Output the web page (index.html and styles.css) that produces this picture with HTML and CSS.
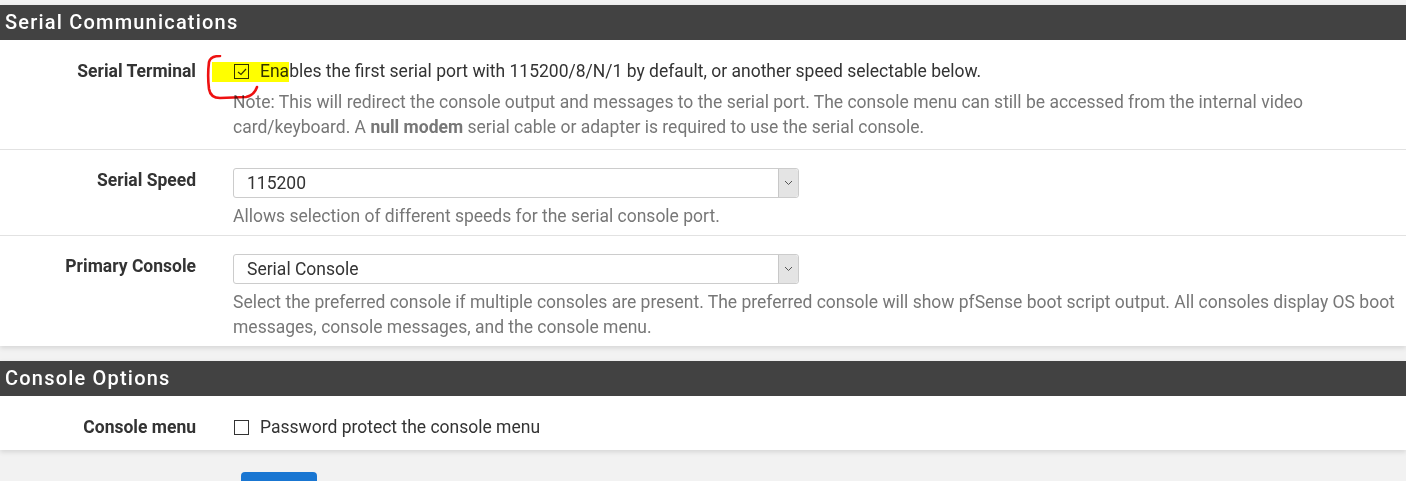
FILE: index.html
```html
<!DOCTYPE html>
<html lang="en">
<head>
    <meta charset="UTF-8">
    <meta name="viewport" content="width=device-width, initial-scale=1.0">
    <title>System / Advanced / Admin Access</title>
    <link rel="stylesheet" href="styles.css">
</head>
<body>
    <div class="panel">
        <div class="panel-heading">Serial Communications</div>
        <div class="panel-body">
            <div class="form-group first">
                <div class="label">Serial Terminal</div>
                <div class="field">
                    <label class="checkline">
                        <span class="check">
                            <svg width="10" height="8" viewBox="0 0 10 8"><path d="M1 4 L4 6.5 L9 1" fill="none" stroke="#333" stroke-width="1.2"/></svg>
                        </span>
                        Enables the first serial port with 115200/8/N/1 by default, or another speed selectable below.
                    </label>
                    <p class="help">Note: This will redirect the console output and messages to the serial port. The console menu can still be accessed from the internal video card/keyboard. A <b>null modem</b> serial cable or adapter is required to use the serial console.</p>
                </div>
                <!-- pen marks from the screenshot -->
                <svg class="markup" width="90" height="50" viewBox="0 0 90 50">
                    <rect x="12" y="7" width="77" height="20" fill="#ffff00"/>
                    <path d="M20 1 C14 1 10 3 9 7 C8 15 8 26 9 34 C10 40 14 43 20 43 L46 42 C52 41 55 38 57 32" fill="none" stroke="#ee1111" stroke-width="2.6" stroke-linecap="round"/>
                </svg>
            </div>
            <div class="form-group">
                <div class="label">Serial Speed</div>
                <div class="field">
                    <div class="select">115200<span class="arrow"><svg width="9" height="6" viewBox="0 0 9 6"><path d="M1 1 L4.5 4.5 L8 1" fill="none" stroke="#555" stroke-width="1"/></svg></span></div>
                    <p class="help">Allows selection of different speeds for the serial console port.</p>
                </div>
            </div>
            <div class="form-group">
                <div class="label">Primary Console</div>
                <div class="field">
                    <div class="select">Serial Console<span class="arrow"><svg width="9" height="6" viewBox="0 0 9 6"><path d="M1 1 L4.5 4.5 L8 1" fill="none" stroke="#555" stroke-width="1"/></svg></span></div>
                    <p class="help">Select the preferred console if multiple consoles are present. The preferred console will show pfSense boot script output. All consoles display OS boot messages, console messages, and the console menu.</p>
                </div>
            </div>
        </div>
    </div>

    <div class="panel">
        <div class="panel-heading">Console Options</div>
        <div class="panel-body">
            <div class="form-group single">
                <div class="label">Console menu</div>
                <div class="field">
                    <label class="checkline"><span class="check"></span> Password protect the console menu</label>
                </div>
            </div>
        </div>
    </div>

    <div class="actions">
        <button class="btn"></button>
    </div>
</body>
</html>
```

FILE: styles.css
```css
body {
    margin: 0;
    padding-top: 5px;
    background-color: #f2f2f2;
    font-family: Roboto, "Liberation Sans", sans-serif;
    font-size: 17.5px;
    color: #333;
}
.panel {
    background-color: #fff;
    box-shadow: 0 2px 5px rgba(0, 0, 0, 0.12);
    margin-bottom: 15px;
}
.panel-heading {
    background-color: #424242;
    color: #fff;
    height: 35px;
    line-height: 35px;
    padding-left: 5px;
    font-size: 20px;
    font-weight: 500;
    letter-spacing: 1.2px;
}
.form-group {
    position: relative;
    display: grid;
    grid-template-columns: 196px 1fr;
    column-gap: 37px;
    padding: 18px 6px 6px 0;
    border-top: 1px solid #e2e2e2;
}
.form-group.first {
    border-top: none;
    padding-top: 19px;
    padding-bottom: 9px;
}
.form-group.single {
    border-top: none;
    padding-top: 19px;
    padding-bottom: 10px;
}
.label {
    text-align: right;
    font-weight: 700;
    line-height: 25px;
}
.field {
    line-height: 25px;
}
.checkline {
    display: flex;
    align-items: center;
    gap: 11px;
    position: relative;
    z-index: 1;
}
.check {
    display: inline-flex;
    align-items: center;
    justify-content: center;
    width: 13px;
    height: 13px;
    border: 1px solid #333;
    margin-left: 1px;
}
.help {
    margin: 6px 0 0;
    color: #777;
}
.select {
    position: relative;
    width: 551px;
    height: 28px;
    line-height: 28px;
    border: 1px solid #ccc;
    border-radius: 3px;
    padding-left: 13px;
}
.arrow {
    position: absolute;
    right: 0;
    top: 0;
    width: 19px;
    height: 28px;
    background-color: #e4e4e4;
    border-left: 1px solid #c8c8c8;
    border-radius: 0 3px 3px 0;
    display: flex;
    align-items: center;
    justify-content: center;
}
.markup {
    position: absolute;
    left: 200px;
    top: 15px;
    mix-blend-mode: multiply;
    z-index: 2;
}
.actions {
    padding: 7px 0 0 241px;
}
.btn {
    width: 76px;
    height: 36px;
    background-color: #1976d2;
    border: none;
    border-radius: 4px;
}
```
